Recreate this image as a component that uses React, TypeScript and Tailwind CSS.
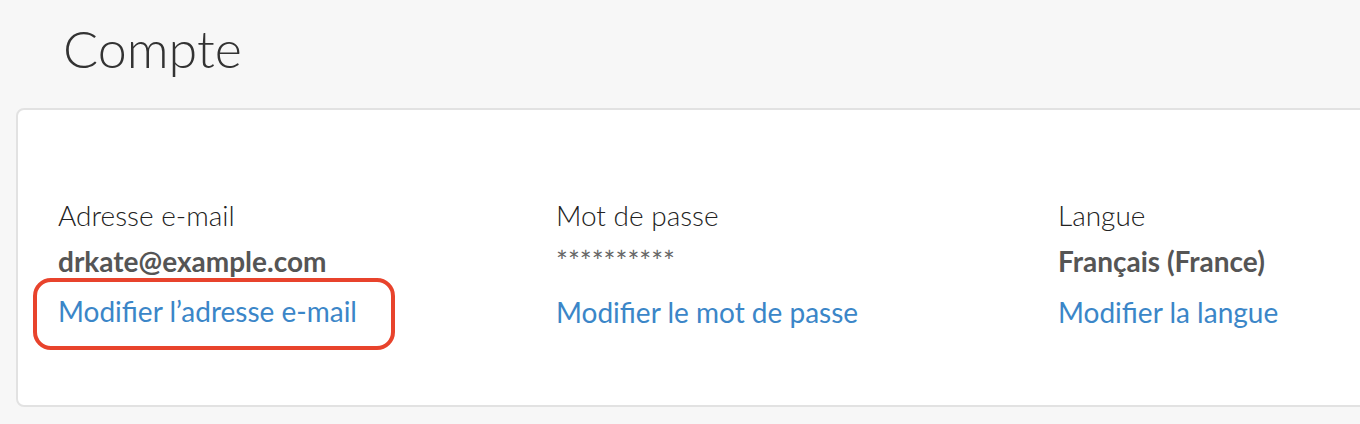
const columns = [
  { label: 'Mot de passe', value: '**********', link: 'Modifier le mot de passe', secret: true },
  { label: 'Langue', value: 'Français (France)', link: 'Modifier la langue', secret: false },
];

export default function App() {
  return (
    <div className="h-[424px] w-[1360px] overflow-hidden bg-[#f7f7f7] font-['Lato','Open_Sans',sans-serif]">
      <h1 className="pl-[63px] pt-[16px] text-[52px] font-light leading-[64px] text-[#333333]">Compte</h1>
      <div className="ml-4 mt-[28px] h-[299px] w-[1360px] rounded-lg border-2 border-[#e2e2e2] bg-white">
        <div className="grid grid-cols-[498px_502px_1fr] pl-10 pt-[88px]">
          <div>
            <div className="text-[28px] font-light leading-[34px] text-[#222222]">Adresse e-mail</div>
            <div className="mt-[12px] text-[28px] font-bold leading-[34px] text-[#555555]">drkate@example.com</div>
            <div className="-ml-[25px] inline-block rounded-[18px] border-4 border-[#e8432c] pb-[18px] pl-[21px] pr-[34px] pt-[12px]">
              <span className="block text-[28px] leading-[34px] text-[#3b86c8]">Modifier l’adresse e-mail</span>
            </div>
          </div>
          {columns.map((c) => (
            <div key={c.label}>
              <div className="text-[28px] font-light leading-[34px] text-[#222222]">{c.label}</div>
              {c.secret ? (
                <div className="mt-[12px] text-[28px] font-normal leading-[34px] text-[#666666]">{c.value}</div>
              ) : (
                <div className="mt-[12px] text-[28px] font-bold leading-[34px] text-[#555555]">{c.value}</div>
              )}
              <div className="mt-[17px] text-[28px] leading-[34px] text-[#3b86c8]">{c.link}</div>
            </div>
          ))}
        </div>
      </div>
    </div>
  );
}
